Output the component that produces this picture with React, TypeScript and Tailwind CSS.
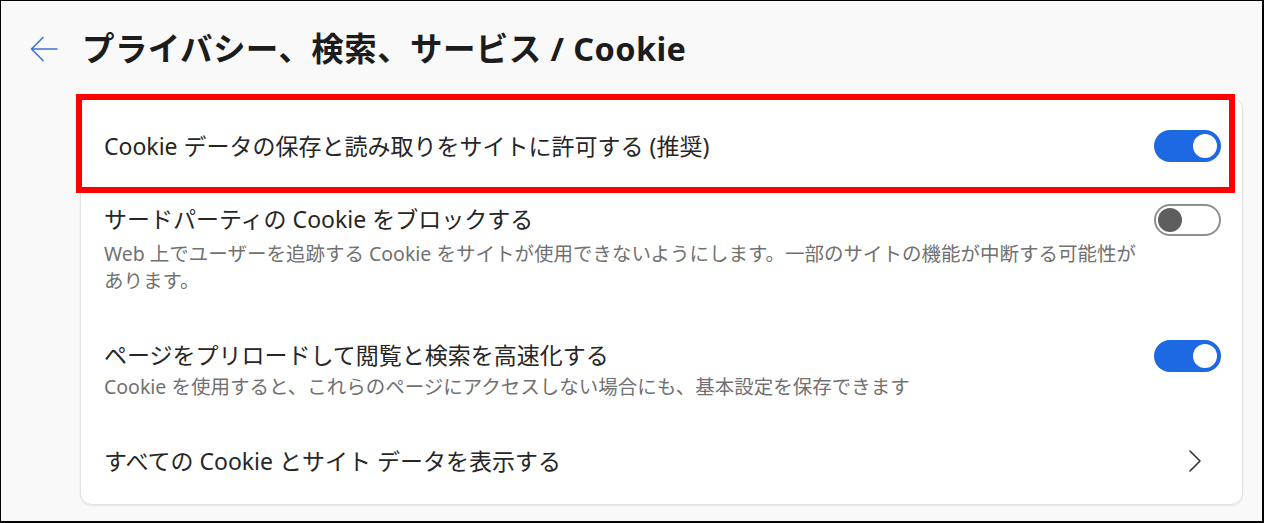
import React from "react";

const font = { fontFamily: '"Noto Sans", "Noto Sans CJK JP", sans-serif' };

const Toggle = ({ on }: { on: boolean }) =>
  on ? (
    <div className="flex h-[32px] w-[67px] shrink-0 items-center justify-end rounded-full bg-[#1d69e3] pr-[4px]">
      <div className="h-[24px] w-[24px] rounded-full bg-white" />
    </div>
  ) : (
    <div className="flex h-[32px] w-[67px] shrink-0 items-center rounded-full border-2 border-[#8f8f8f] bg-white pl-[2px]">
      <div className="h-[24px] w-[24px] rounded-full bg-[#5e5e5e]" />
    </div>
  );

export default function App() {
  return (
    <div
      className="h-[523px] w-[1264px] overflow-hidden border-t border-l border-r-2 border-b-2 border-black bg-[#f9f9f9] text-[#1f1f1f]"
      style={font}
    >
      <header className="flex h-[96px] items-center pl-[28px]">
        <svg width="30" height="30" viewBox="0 0 30 30" fill="none" className="shrink-0">
          <path
            d="M28 15H3M14 3.5L2.5 15L14 26.5"
            stroke="#3b73d9"
            strokeWidth="1.6"
            strokeLinecap="round"
            strokeLinejoin="round"
          />
        </svg>
        <h1 className="ml-[23px] text-[32.5px] font-bold leading-none tracking-[0.4px] text-[#1c1c1c]">
          プライバシー、検索、サービス / Cookie
        </h1>
      </header>

      <div className="relative ml-[79px] h-[408px] w-[1163px] rounded-[12px] border border-[#e3e3e3] bg-white shadow-[0_1px_2px_rgba(0,0,0,0.08)]">
        <div className="pointer-events-none absolute -left-[5px] -top-[4px] h-[99px] w-[1159px] border-[6px] border-[#ff0000]" />

        <div className="flex h-[95px] items-center justify-between pl-[23px] pr-[21px]">
          <span className="text-[23px] leading-[30px] text-[#262626]">
            Cookie データの保存と読み取りをサイトに許可する (推奨)
          </span>
          <Toggle on />
        </div>

        <div className="flex items-start justify-between pl-[23px] pr-[21px] pt-[11px]">
          <div className="w-[1050px]">
            <div className="text-[23px] leading-[30px] text-[#262626]">
              サードパーティの Cookie をブロックする
            </div>
            <div className="mt-[6px] text-[19.5px] leading-[27px] text-[#717171]">
              Web 上でユーザーを追跡する Cookie をサイトが使用できないようにします。一部のサイトの機能が中断する可能性があります。
            </div>
          </div>
          <Toggle on={false} />
        </div>

        <div className="mt-[46px] flex items-start justify-between pl-[23px] pr-[21px]">
          <div>
            <div className="text-[23px] leading-[30px] text-[#262626]">
              ページをプリロードして閲覧と検索を高速化する
            </div>
            <div className="mt-[3px] text-[19.5px] leading-[27px] text-[#717171]">
              Cookie を使用すると、これらのページにアクセスしない場合にも、基本設定を保存できます
            </div>
          </div>
          <Toggle on />
        </div>

        <div className="mt-[46px] flex items-center justify-between pl-[23px] pr-[40px]">
          <span className="text-[23px] leading-[30px] text-[#262626]">
            すべての Cookie とサイト データを表示する
          </span>
          <svg width="14" height="22" viewBox="0 0 14 22" fill="none">
            <path d="M2 1L12 11L2 21" stroke="#333333" strokeWidth="1.6" strokeLinecap="round" strokeLinejoin="round" />
          </svg>
        </div>
      </div>
    </div>
  );
}
